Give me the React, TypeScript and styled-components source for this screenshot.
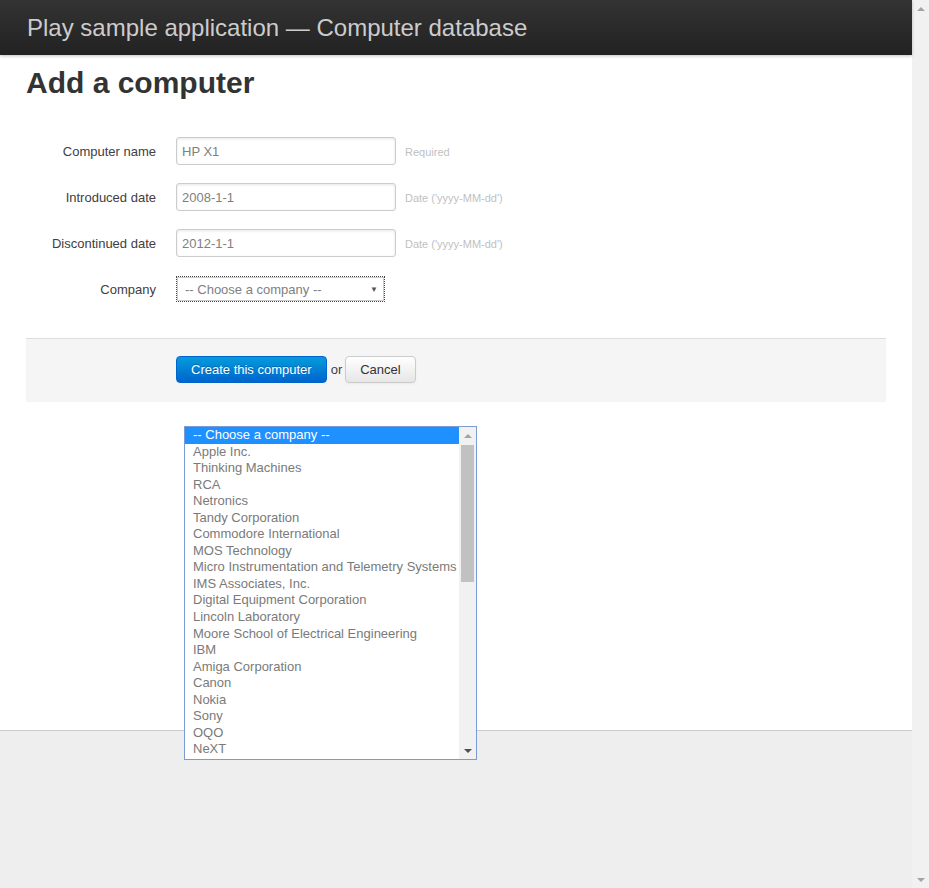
import React from "react";
import styled, { createGlobalStyle, css } from "styled-components";

const Global = createGlobalStyle`
  html, body { margin: 0; padding: 0; overflow: hidden; }
  body { font-family: "Liberation Sans", Arial, Helvetica, sans-serif; font-size: 13px; color: #404040; }
  * { box-sizing: border-box; }
`;

const Shell = styled.div`
  display: flex;
  width: 929px;
  height: 888px;
  background: #eeeeee;
`;

const Main = styled.div`
  position: relative;
  flex: 1;
  display: flex;
  flex-direction: column;
  background: #eeeeee;
`;

const Header = styled.header`
  height: 55px;
  flex: none;
  background: linear-gradient(#333333, #222222);
  box-shadow: 0 1px 3px rgba(0, 0, 0, 0.25);
  display: flex;
  align-items: center;
  padding-left: 27px;
  position: relative;
  z-index: 1;
`;

const AppTitle = styled.h1`
  margin: 0;
  font-size: 24px;
  font-weight: normal;
  color: #cccccc;
  padding-top: 1px;
`;

const Content = styled.section`
  height: 676px;
  flex: none;
  background: #ffffff;
  border-bottom: 1px solid #cccccc;
  padding: 10px 26px 0 26px;
`;

const PageTitle = styled.h2`
  margin: 0 0 36px 0;
  font-size: 30px;
  line-height: 36px;
  font-weight: bold;
  color: #333333;
`;

const Fieldset = styled.div`
  display: flex;
  flex-direction: column;
  gap: 18px;
  margin-bottom: 35px;
`;

const Row = styled.div`
  display: flex;
  align-items: center;
  height: 28px;
`;

const Label = styled.label`
  width: 130px;
  text-align: right;
  margin-right: 20px;
  padding-top: 2px;
  font-size: 13px;
  line-height: 18px;
  color: #404040;
`;

const TextInput = styled.div`
  width: 220px;
  height: 28px;
  border: 1px solid #cccccc;
  border-radius: 3px;
  padding: 0 5px;
  display: flex;
  align-items: center;
  font-size: 13px;
  color: #808080;
  box-shadow: inset 0 1px 3px rgba(0, 0, 0, 0.1);
`;

const Help = styled.span`
  margin-left: 9px;
  padding-top: 1px;
  font-size: 11px;
  color: #bfbfbf;
`;

const SelectBox = styled.div`
  width: 209px;
  height: 26px;
  border: 1px dotted #444444;
  outline: 1px solid #cccccc;
  outline-offset: -2px;
  display: flex;
  align-items: center;
  justify-content: space-between;
  padding: 0 6px 0 8px;
  font-size: 13px;
  color: #808080;
`;

const Caret = styled.span`
  font-size: 8px;
  color: #555555;
`;

const Actions = styled.div`
  display: flex;
  align-items: center;
  background: #f5f5f5;
  border-top: 1px solid #dddddd;
  height: 64px;
  padding: 0 0 2px 150px;
`;

const Button = styled.div<{ $primary?: boolean }>`
  height: 27px;
  display: flex;
  align-items: center;
  padding: 0 14px;
  border-radius: 4px;
  font-size: 13px;
  cursor: pointer;
  ${(p) =>
    p.$primary
      ? css`
          background: linear-gradient(#049cdb, #0064cd);
          border: 1px solid #0064cd;
          color: #ffffff;
          text-shadow: 0 -1px 0 rgba(0, 0, 0, 0.25);
        `
      : css`
          background: linear-gradient(#ffffff, #e6e6e6);
          border: 1px solid #cccccc;
          color: #333333;
          box-shadow: 0 1px 2px rgba(0, 0, 0, 0.05);
        `}
`;

const Or = styled.span`
  margin: 0 3px 0 4px;
  font-size: 13px;
  color: #404040;
`;

const Filler = styled.div`
  flex: 1;
`;

const Dropdown = styled.div`
  position: absolute;
  left: 184px;
  top: 426px;
  width: 293px;
  height: 334px;
  border: 1px solid #7a9cd3;
  background: #ffffff;
  display: flex;
  z-index: 5;
`;

const OptionList = styled.div`
  flex: 1;
  display: flex;
  flex-direction: column;
`;

const Option = styled.div<{ $selected?: boolean }>`
  height: 16.55px;
  line-height: 16px;
  padding-left: 8px;
  font-size: 13px;
  white-space: nowrap;
  color: ${(p) => (p.$selected ? "#ffffff" : "#7a7a7a")};
  background: ${(p) => (p.$selected ? "#1e90ff" : "transparent")};
`;

const Scrollbar = styled.div`
  width: 17px;
  flex: none;
  background: #f1f1f1;
  display: flex;
  flex-direction: column;
  align-items: center;
`;

const Arrow = styled.div<{ $down?: boolean; $dark?: boolean }>`
  height: 17px;
  width: 17px;
  flex: none;
  display: flex;
  align-items: center;
  justify-content: center;
  &::after {
    content: "";
    width: 0;
    height: 0;
    border-left: 4px solid transparent;
    border-right: 4px solid transparent;
    ${(p) =>
      p.$down
        ? css`border-top: 4px solid ${p.$dark ? "#505050" : "#a3a3a3"};`
        : css`border-bottom: 4px solid #a3a3a3;`}
  }
`;

const Track = styled.div`
  flex: 1;
  width: 100%;
  display: flex;
  flex-direction: column;
  align-items: center;
`;

const Thumb = styled.div`
  width: 13px;
  height: 137px;
  margin-top: 1px;
  background: #c1c1c1;
`;

const companies = [
  "Apple Inc.",
  "Thinking Machines",
  "RCA",
  "Netronics",
  "Tandy Corporation",
  "Commodore International",
  "MOS Technology",
  "Micro Instrumentation and Telemetry Systems",
  "IMS Associates, Inc.",
  "Digital Equipment Corporation",
  "Lincoln Laboratory",
  "Moore School of Electrical Engineering",
  "IBM",
  "Amiga Corporation",
  "Canon",
  "Nokia",
  "Sony",
  "OQO",
  "NeXT",
];

const fields = [
  { label: "Computer name", value: "HP X1", help: "Required" },
  { label: "Introduced date", value: "2008-1-1", help: "Date ('yyyy-MM-dd')" },
  { label: "Discontinued date", value: "2012-1-1", help: "Date ('yyyy-MM-dd')" },
];

export default function App() {
  return (
    <>
      <Global />
      <Shell>
        <Main>
          <Header>
            <AppTitle>Play sample application — Computer database</AppTitle>
          </Header>
          <Content>
            <PageTitle>Add a computer</PageTitle>
            <Fieldset>
              {fields.map((f) => (
                <Row key={f.label}>
                  <Label>{f.label}</Label>
                  <TextInput>{f.value}</TextInput>
                  <Help>{f.help}</Help>
                </Row>
              ))}
              <Row>
                <Label>Company</Label>
                <SelectBox>
                  <span>-- Choose a company --</span>
                  <Caret>▼</Caret>
                </SelectBox>
              </Row>
            </Fieldset>
            <Actions>
              <Button $primary>Create this computer</Button>
              <Or>or</Or>
              <Button>Cancel</Button>
            </Actions>
          </Content>
          <Filler />
          <Dropdown>
            <OptionList>
              <Option $selected>-- Choose a company --</Option>
              {companies.map((c) => (
                <Option key={c}>{c}</Option>
              ))}
            </OptionList>
            <Scrollbar>
              <Arrow />
              <Track>
                <Thumb />
              </Track>
              <Arrow $down $dark />
            </Scrollbar>
          </Dropdown>
        </Main>
        <Scrollbar>
          <Arrow />
          <Track />
          <Arrow $down />
        </Scrollbar>
      </Shell>
    </>
  );
}
